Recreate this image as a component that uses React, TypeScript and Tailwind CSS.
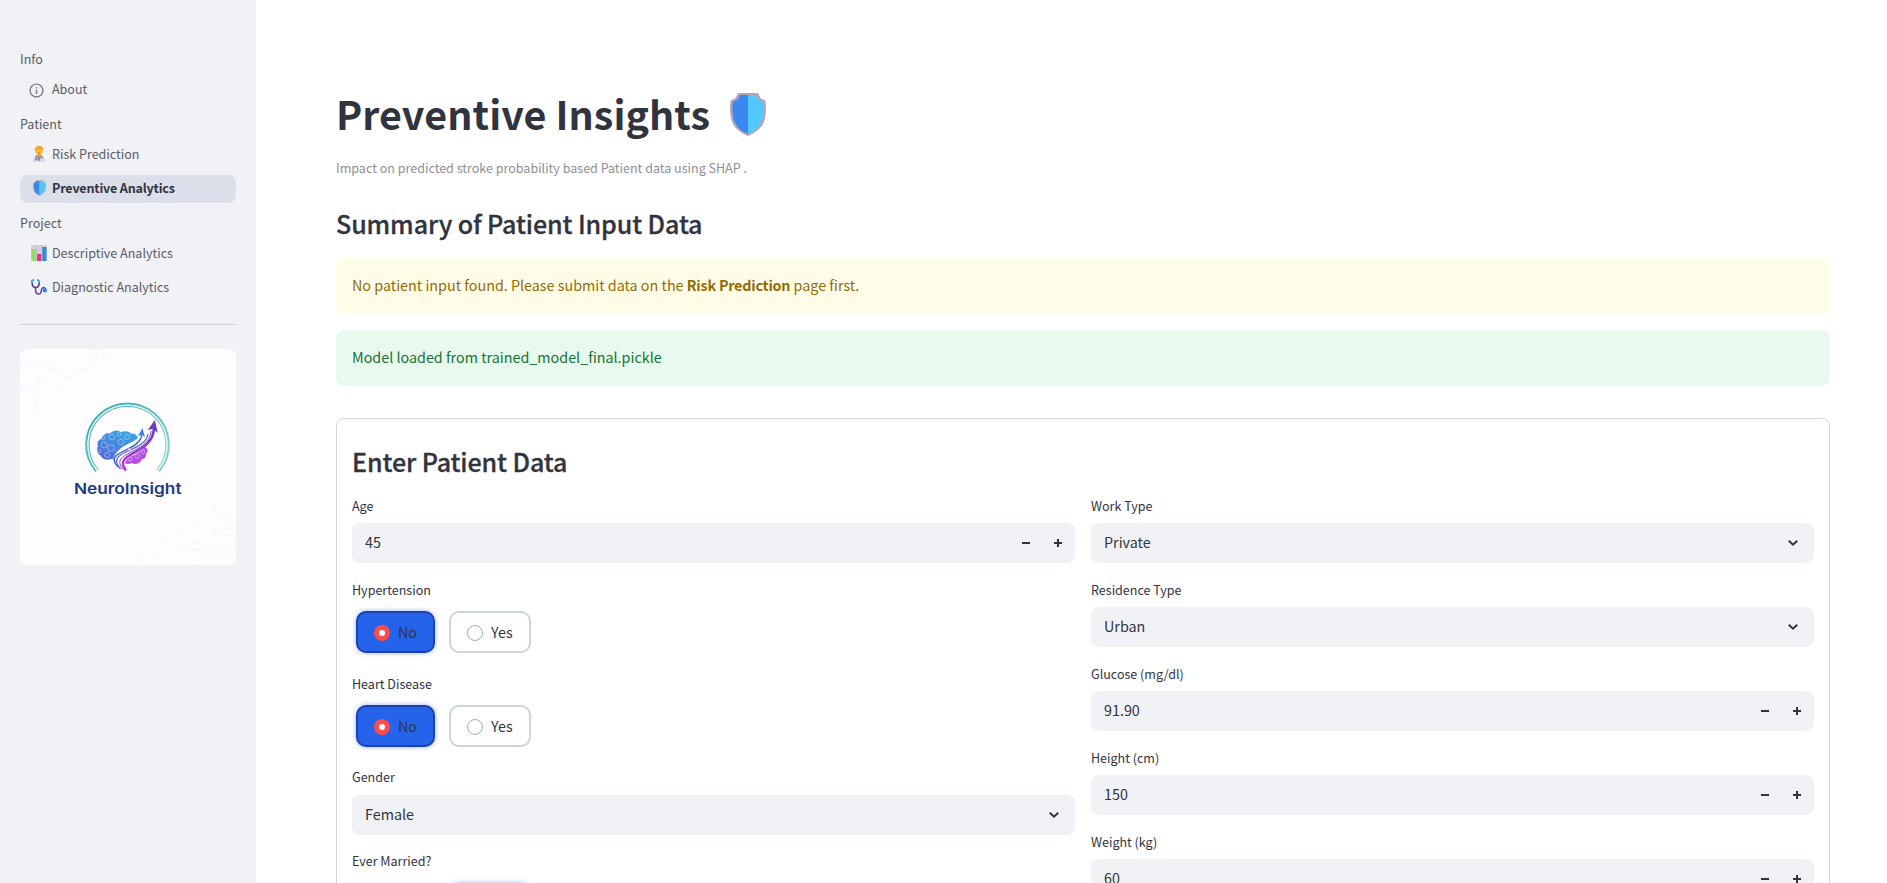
import React from "react";

function Shield({ className }: { className: string }) {
  return (
    <svg viewBox="0 0 36 43" className={className}>
      <path d="M9 0h18c2.500 0 2 5.500 5.500 6.300C35 6.900 35.500 7.500 35.600 9c.9 8.500.2 16-2.600 22C29.700 37 22 41.500 18 43 14 41.500 6.300 37 3 31 .2 25-.5 17.500.4 9c.1-1.500.6-2.100 3.100-2.700C7 5.500 6.500 0 9 0Z" fill="#b3a5b8" />
      <path d="M10 2H18V41C12 38.500 7.500 35 5.300 30.500 2.600 25 2 17 2.700 8.700 7 7.500 8.500 6 10 2Z" fill="#3a87ee" />
      <path d="M26 2H18V41C24 38.500 28.500 35 30.700 30.500c2.700-5.500 3.300-13.500 2.600-21.800C29 7.500 27.500 6 26 2Z" fill="#53c7ff" />
    </svg>
  );
}

function Info() {
  return (
    <svg viewBox="0 0 24 24" className="relative -left-[3px] top-px size-[17px] shrink-0" fill="#7d818b">
      <path d="M11 7h2v2h-2zm0 4h2v6h-2zm1-9C6.480 2 2 6.480 2 12s4.480 10 10 10 10-4.480 10-10S17.520 2 12 2zm0 18c-4.410 0-8-3.590-8-8s3.590-8 8-8 8 3.590 8 8-3.590 8-8 8z" />
    </svg>
  );
}

function Doctor() {
  return (
    <svg viewBox="0 0 16 16" className="size-4">
      <path d="M1.800 16c0-4.200 1.700-7 6.200-7s6 2.800 6 7Z" fill="#dcd6e8" />
      <path d="M5 9.500 8 14.500l2.700-5Z" fill="#6d8fc0" />
      <path d="M5.200 9.600v3.600M10.800 9.800v3M8 12.500v2.500M4.200 14.200c0-1.600 2-1.600 2 0" stroke="#6b5f9b" strokeWidth=".9" fill="none" />
      <circle cx="8" cy="4.600" r="3.900" fill="#fcc02e" />
      <path d="M3.900 5.500C3.300 1.500 5.500 0 8 0s4.700 1.200 4.300 4.600C10.500 3.500 8 2 6 3c-1 .5-.8 1.800-2.100 2.500Z" fill="#f5a32a" />
      <path d="M6.600 7.400h3v3L8.200 12 6.600 10.400Z" fill="#f59322" />
      <path d="M6.800 6.300c.8.800 1.900.8 2.700 0Z" fill="#c9562c" />
    </svg>
  );
}

function Chart() {
  return (
    <svg viewBox="0 0 16 16" className="size-4">
      <rect width="16" height="16" rx="1" fill="#d5cfdc" />
      <path d="M0 5h16M0 10h16M5 0v16M11 0v16" stroke="#bdb5c8" strokeWidth=".6" />
      <rect x=".5" y="4" width="4.500" height="12" fill="#92dc6c" />
      <rect x="6" y="9" width="4.300" height="7" fill="#e8337c" />
      <rect x="11.300" y="2" width="4.200" height="14" fill="#3489dc" />
    </svg>
  );
}

function Stethoscope() {
  return (
    <svg viewBox="0 0 16 16" className="size-4" fill="none" strokeLinecap="round">
      <path d="M2.300 1.200C.8 1.200.9 2.200 1 3.500c.2 3 1.300 5 3.500 5S8.200 6.500 8.300 3.500c0-1.300 0-2.300-1.300-2.300" stroke="#553a94" strokeWidth="1.600" />
      <path d="M1 3C1 1.700 1.200 1 2.600 1M8.300 3C8.300 1.700 8 1 6.700 1" stroke="#3fb8ef" strokeWidth="1.600" />
      <path d="M4.600 8.700v2.800c0 4.500 5.700 4.500 5.700.5 0-3.800 3-4.500 4-1.800" stroke="#6b44a8" strokeWidth="1.600" />
      <circle cx="13.900" cy="11.400" r="2.100" fill="#2e7cf0" />
    </svg>
  );
}

function NavLabel({ children, className }: { children: string; className: string }) {
  return <div className={`text-[12.540px] leading-[21px] text-[#5a5d68] ${className}`}>{children}</div>;
}

function NavItem({ icon, children, active = false }: { icon: React.ReactNode; children: string; active?: boolean }) {
  return (
    <div
      className={
        active
          ? "flex h-7 items-center rounded-lg bg-[#dadfe9] pb-[2px] pl-[11px] text-[12.540px] font-bold leading-[26px] tracking-[-0.17px] text-[#31333f]"
          : "flex h-7 items-center rounded-lg pb-[2px] pl-[11px] text-[12.540px] leading-[26px] text-[#5a5d68]"
      }
    >
      <span className="mr-[5px] flex size-4 items-center justify-center">{icon}</span>
      <span>{children}</span>
    </div>
  );
}

function Logo() {
  return (
    <svg viewBox="0 0 216 216" className="block size-[216px] rounded-lg bg-[#fdfdfd]">
      <defs>
        <linearGradient id="ring" x1="0" y1="0" x2="1" y2="1">
          <stop offset="0" stopColor="#2fa9c4" />
          <stop offset="1" stopColor="#8fd6cb" />
        </linearGradient>
        <linearGradient id="brain" x1="0" y1="1" x2=".6" y2="0">
          <stop offset="0" stopColor="#5960dd" />
          <stop offset="1" stopColor="#3aa5e0" />
        </linearGradient>
        <linearGradient id="flow" x1="0" y1="1" x2="1" y2="0">
          <stop offset="0" stopColor="#c035e4" />
          <stop offset="1" stopColor="#6a3fc0" />
        </linearGradient>
      </defs>
      <g fill="none" stroke="#f7f7f8" strokeWidth="1">
        <path d="M0 14h30l6-7h28l6-7M0 26h24l8-6h36l7-9M0 36h14l10-8h28M0 41h12l5 7v11M80 0l13 9M216 174h-14l-8-12v-7M216 180h-24l-16-10M216 186H160M216 193H180M216 200h-60l-10 8h-16l-9 8M216 208h-40l-8 8M117 216v-9" />
        <circle cx="75" cy="4" r="2" /><circle cx="93" cy="11" r="2" /><circle cx="65" cy="20" r="2" />
        <circle cx="35" cy="19" r="2" /><circle cx="54" cy="28" r="2" /><circle cx="20" cy="32" r="2" />
        <circle cx="39" cy="42" r="2" /><circle cx="16" cy="60" r="2" /><circle cx="195" cy="155" r="2" />
        <circle cx="173" cy="171" r="2" /><circle cx="194" cy="181" r="2" /><circle cx="158" cy="184" r="2" />
        <circle cx="177" cy="193" r="2" /><circle cx="146" cy="193" r="2" /><circle cx="211" cy="179" r="2" />
        <circle cx="210" cy="168" r="2" /><circle cx="117" cy="205" r="2" />
      </g>
      <g fill="none" stroke="url(#ring)">
        <path d="M76 122.500A41.300 41.300 0 1 1 139 122.500" strokeWidth="2" />
        <path d="M78.500 121A38.500 38.500 0 1 1 136.500 121" strokeWidth="1.100" />
      </g>
      <path d="M91 110c-3 1.500-9 .5-10.500-3.500-3.500-2-4.500-6.500-2.500-9-1.500-4 .5-7 4-8 .5-4 5-6 8-5 3-3.500 8-4 11-1.500 4-1.500 8-1 10 1.500 3.500-.5 6 1.500 7 4.500-6 6-20 7-25 21Z" fill="url(#brain)" />
      <g fill="none" stroke="#a6d4f5" strokeWidth=".6">
        <circle cx="84" cy="96" r="3" /><circle cx="91" cy="99" r="3.500" /><circle cx="87" cy="106" r="2.500" />
        <circle cx="92" cy="88" r="2.800" /><circle cx="101" cy="93" r="2.800" /><circle cx="107" cy="88" r="2.500" />
        <circle cx="99" cy="85" r="2" /><circle cx="83" cy="89" r="1.800" /><circle cx="79" cy="102" r="1.700" />
      </g>
      <path d="M102 112c7-4 17-7 23-14 3 1 3.500 5 1 7 .5 3-2 5-4 5-2 5-7 6-10 4-4 2-8 1-10-2Z" fill="#b54fe6" />
      <g fill="none" stroke="#e6bcf7" strokeWidth=".6"><circle cx="110" cy="110" r="2" /><circle cx="117" cy="107" r="2.300" /><circle cx="123" cy="103" r="1.800" /></g>
      <path d="M97 119C84 102 113 101 119 89L133 82C132 102 100 104 105 121Z" fill="white" />
      <g fill="none" stroke="url(#flow)">
        <path d="M98 118C82 101 120 104 122 85" stroke="#3d6bd0" strokeWidth="1.600" />
        <path d="M100.500 120C84 101 125 104 128 85" stroke="#5a5bd0" strokeWidth="1.200" />
        <path d="M103 120.500C88 102 129 106 131 82" stroke="#7651d0" strokeWidth="1" />
        <path d="M106 121.500C91 103 134 107 134 78" strokeWidth="2.600" />
      </g>
      <path d="m122.500 79-4.500 8 4-1.500 3 3Z" fill="#3d83d3" />
      <path d="m134.800 71-7 10 5-1.200 5 4Z" fill="#6b3bbd" />
      <circle cx="109.500" cy="100.500" r="1.600" fill="white" stroke="#7b72d8" strokeWidth=".8" />
      <text x="54" y="145" textLength="107.500" lengthAdjust="spacingAndGlyphs" className="font-['Inter',sans-serif] text-[14.800px] font-semibold" fill="#1c3a80">NeuroInsight</text>
    </svg>
  );
}

function Field({ label, raised = false, children }: { label: string; raised?: boolean; children: React.ReactNode }) {
  return (
    <div className="flex flex-col">
      <div className={raised ? "h-7 text-[12.540px] leading-[19px]" : "h-7 text-[12.540px] leading-[21px]"}>{label}</div>
      {children}
    </div>
  );
}

function SelectBox({ value }: { value: string }) {
  return (
    <div className="flex h-10 items-center justify-between rounded-lg bg-[#f0f2f6] px-[13px] text-[14.330px] leading-[22px]">
      <span className="pb-[2px]">{value}</span>
      <svg viewBox="0 0 16 16" className="size-4" fill="none" stroke="#31333f" strokeWidth="2">
        <path d="M3.800 5.700 8 9.700l4.200-4" />
      </svg>
    </div>
  );
}

function NumberBox({ value }: { value: string }) {
  return (
    <div className="flex h-10 items-center justify-between rounded-lg bg-[#f0f2f6] pl-[13px] text-[14.330px] leading-[22px]">
      <span className="pb-[2px]">{value}</span>
      <span className="flex">
        <span className="flex w-8 items-center justify-center"><span className="h-[2px] w-2 bg-[#31333f]" /></span>
        <span className="flex w-[33px] items-center pl-[12px]">
          <svg viewBox="0 0 8 8" className="size-2" fill="#31333f"><path d="M3 0h2v3h3v2H5v3H3V5H0V3h3z" /></svg>
        </span>
      </span>
    </div>
  );
}

function YesNo({ selected }: { selected: "No" | "Yes" }) {
  const on = "flex h-[42px] items-center rounded-[10px] border-2 border-[#1e40af] bg-[#2563eb] px-4 shadow-[0_0_5px_rgba(37,99,235,0.5)]";
  const off = "flex h-[42px] items-center rounded-[10px] border-2 border-[#cbd5e1] bg-white px-4";
  return (
    <div className="flex gap-[14px] p-1 text-[14.330px] leading-[22px]">
      {["No", "Yes"].map((option) => (
        <div key={option} className={`${option === selected ? on : off} ${option === "No" ? "w-[79px]" : "w-[82px]"}`}>
          {option === selected ? (
            <span className="mr-2 mt-[2px] flex size-4 items-center justify-center rounded-full bg-[#ff4b4b]"><span className="size-[6px] rounded-full bg-white" /></span>
          ) : (
            <span className="mr-2 mt-[2px] size-4 rounded-full border border-[#a9aaae] bg-white" />
          )}
          <span>{option}</span>
        </div>
      ))}
    </div>
  );
}

export default function App() {
  return (
    <div className="flex h-[883px] w-full overflow-hidden bg-white font-['Noto_Sans_CJK_SC','Noto_Sans',sans-serif] text-[#31333f]">
      <aside className="w-64 shrink-0 bg-[#f0f2f6] px-5 pt-12">
        <NavLabel className="h-7">Info</NavLabel>
        <NavItem icon={<Info />}>About</NavItem>
        <NavLabel className="h-[37px] pt-[9px]">Patient</NavLabel>
        <NavItem icon={<Doctor />}>Risk Prediction</NavItem>
        <div className="h-[6px]" />
        <NavItem icon={<Shield className="h-4 w-[13px]" />} active>Preventive Analytics</NavItem>
        <NavLabel className="h-[37px] pt-[9px]">Project</NavLabel>
        <NavItem icon={<Chart />}>Descriptive Analytics</NavItem>
        <div className="h-[6px]" />
        <NavItem icon={<Stethoscope />}>Diagnostic Analytics</NavItem>
        <div className="mb-6 mt-[22px] h-px bg-[#cfd1d6]" />
        <Logo />
      </aside>
      <main className="flex-1 pl-20 pr-[57px] pt-[89px]">
        <h1 className="flex h-[53px] items-center text-[39.400px] font-bold leading-[53px]">
          <span className="pb-[6px] tracking-[0.05px]">Preventive Insights</span>
          <Shield className="mb-[2px] ml-5 h-[43px] w-9" />
        </h1>
        <p className="mt-[15px] h-[21px] text-[12.540px] leading-[21px] text-[#8f9096]">Impact on predicted stroke probability based Patient data using SHAP .</p>
        <h2 className="mt-[28px] h-[34px] text-[25.070px] font-medium leading-[34px] tracking-[-0.1px] [-webkit-text-stroke:0.300px_#31333f]">Summary of Patient Input Data</h2>
        <div className="mt-[18px] h-14 rounded-lg bg-[#fffce7] px-4 text-[14.330px] leading-[54px] text-[#926c05]">
          No patient input found. Please submit data on the <b className="tracking-[-0.2px]">Risk Prediction</b> page first.
        </div>
        <div className="mt-4 h-14 rounded-lg bg-[#e8f9ee] px-4 text-[14.330px] leading-[54px] text-[#177233]">Model loaded from trained_model_final.pickle</div>
        <section className="mt-8 h-[600px] rounded-lg border border-[#d6d6d9] px-[15px] pt-[25px]">
          <h2 className="h-[34px] text-[25.070px] font-medium leading-[34px] tracking-[-0.1px] [-webkit-text-stroke:0.300px_#31333f]">Enter Patient Data</h2>
          <div className="mt-[17px] grid grid-cols-2 gap-4">
            <div className="flex flex-col gap-4">
              <Field label="Age"><NumberBox value="45" /></Field>
              <Field label="Hypertension"><YesNo selected="No" /></Field>
              <Field label="Heart Disease"><YesNo selected="No" /></Field>
              <Field label="Gender" raised><SelectBox value="Female" /></Field>
              <Field label="Ever Married?" raised><YesNo selected="Yes" /></Field>
            </div>
            <div className="flex flex-col gap-4">
              <Field label="Work Type"><SelectBox value="Private" /></Field>
              <Field label="Residence Type"><SelectBox value="Urban" /></Field>
              <Field label="Glucose (mg/dl)"><NumberBox value="91.90" /></Field>
              <Field label="Height (cm)"><NumberBox value="150" /></Field>
              <Field label="Weight (kg)"><NumberBox value="60" /></Field>
            </div>
          </div>
        </section>
      </main>
    </div>
  );
}
